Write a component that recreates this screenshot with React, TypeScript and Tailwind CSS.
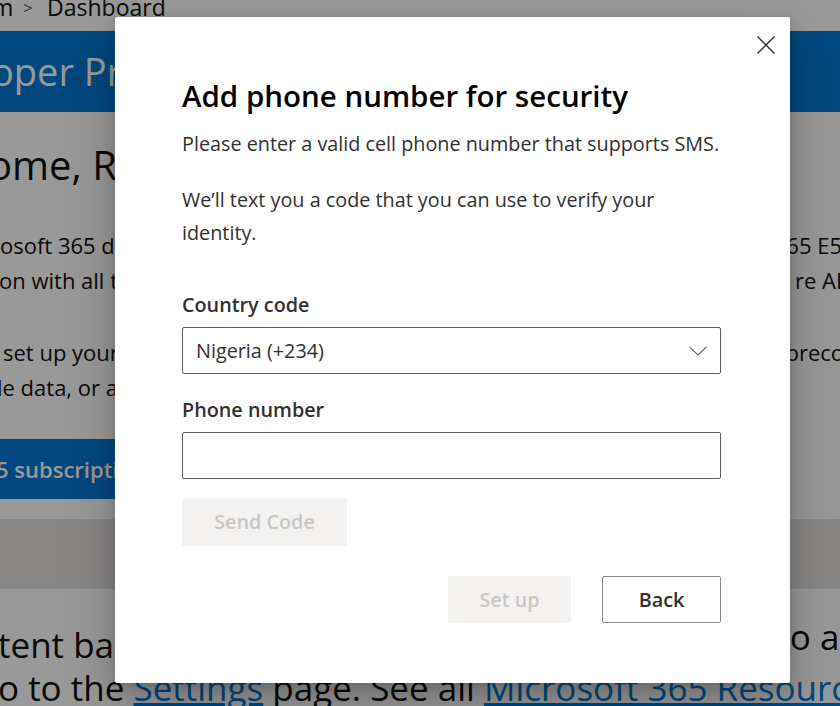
import React from "react";

const font = { fontFamily: '"Open Sans", "Noto Sans", sans-serif' };

function CloseIcon() {
  return (
    <svg width="20" height="20" viewBox="0 0 20 20" fill="none" aria-hidden="true">
      <path d="M1.5 1.5 L18.5 18.5 M18.5 1.5 L1.5 18.5" stroke="#323130" strokeWidth="1.4" />
    </svg>
  );
}

function Chevron() {
  return (
    <svg width="18" height="10" viewBox="0 0 18 10" fill="none" aria-hidden="true">
      <path d="M0.5 0.8 L9 9 L17.5 0.8" stroke="#605e5c" strokeWidth="1.1" />
    </svg>
  );
}

function BackgroundPage() {
  return (
    <div className="absolute inset-0 overflow-hidden bg-white text-[#111]">
      {/* breadcrumb, scrolled mostly out of view */}
      <div className="-mt-[16px] flex h-[47px] items-center whitespace-nowrap text-[23px]">
        <span className="-ml-[8px]">m</span>
        <span className="ml-[10px] text-[17px] text-[#555]">&gt;</span>
        <span className="ml-[14px]">Dashboard</span>
      </div>
      <div className="flex h-[81px] items-center bg-[#0078d4] whitespace-nowrap text-[38px] text-white">
        <span className="-ml-[9px]">oper Program</span>
      </div>
      <div className="mt-[30px] whitespace-nowrap text-[40px] leading-[46px]">
        <span className="-ml-[12px]">ome, Rachel</span>
      </div>
      <div className="mt-[40px] text-[22px] leading-[35px] whitespace-nowrap">
        <div className="flex justify-between">
          <span>osoft 365 developer</span>
          <span className="-mr-[2px]">365 E5</span>
        </div>
        <div className="flex justify-between">
          <span className="-ml-[1px]">on with all the</span>
          <span className="-mr-[12px]">re AD</span>
        </div>
        <div className="h-[37px]" />
        <div className="flex justify-between">
          <span className="ml-[3px]">set up your</span>
          <span className="-mr-[25px]">preconf</span>
        </div>
        <div className="flex justify-between">
          <span className="-ml-[3px]">le data, or add</span>
          <span />
        </div>
      </div>
      <div className="mt-[34px] flex h-[60px] w-[300px] items-center bg-[#0078d4] text-[22px] font-semibold text-white whitespace-nowrap">
        <span className="-ml-[4px]">5 subscription</span>
      </div>
      <div className="mt-[20px] h-[70px] bg-[#e4e2e0]" />
      <div className="mt-[34px] flex justify-between whitespace-nowrap text-[35px] leading-[43px]">
        <span className="-ml-[2px]">tent based</span>
        <span className="-mr-[86px] -mt-[8px]">to access</span>
      </div>
      <div className="whitespace-nowrap text-[35px] leading-[43px]">
        <span className="-ml-[2px]">o to the </span>
        <span className="text-[#0078d4] underline">Settings</span>
        <span> page. See all </span>
        <span className="text-[#0078d4] underline">Microsoft 365 Resources</span>
      </div>
    </div>
  );
}

function Field({ children }: { children?: React.ReactNode }) {
  return (
    <div className="flex h-[47px] w-full items-center justify-between rounded-[2px] border border-[#605e5c] bg-white px-[13px]">
      {children}
    </div>
  );
}

export default function App() {
  return (
    <div className="relative h-[706px] w-[840px] overflow-hidden" style={font}>
      <BackgroundPage />
      <div className="absolute inset-0 bg-black/40" />

      <div className="absolute left-[115px] top-[17px] h-[666px] w-[675px] rounded-[2px] bg-white shadow-[0_25px_58px_rgba(0,0,0,0.22),0_5px_14px_rgba(0,0,0,0.18)]">
        <button className="absolute right-[14px] top-[18px] flex h-[20px] w-[20px] items-center justify-center">
          <CloseIcon />
        </button>

        <div className="pl-[67px] pr-[69px] pt-[61px] text-[#323130]">
          <h1 className="text-[29.5px] font-semibold leading-[36px] text-[#000]">
            Add phone number for security
          </h1>
          <p className="mt-[16px] text-[19.8px] leading-[28px]">
            Please enter a valid cell phone number that supports SMS.
          </p>
          <p className="mt-[25px] text-[19.8px] leading-[33px]">
            We’ll text you a code that you can use to verify your identity.
          </p>

          <label className="mt-[42px] block text-[19.8px] font-semibold leading-[28px]">Country code</label>
          <div className="mt-[8px]">
            <Field>
              <span className="text-[19.8px] text-[#323130]">Nigeria (+234)</span>
              <Chevron />
            </Field>
          </div>

          <label className="mt-[22px] block text-[19.8px] font-semibold leading-[28px]">Phone number</label>
          <div className="mt-[8px]">
            <Field />
          </div>

          <button className="mt-[19px] flex h-[48px] w-[165px] items-center justify-center rounded-[2px] bg-[#f3f2f1] text-[19.8px] font-semibold text-[#c8c6c4]">
            Send Code
          </button>

          <div className="mt-[30px] flex justify-end gap-[31px]">
            <button className="flex h-[47px] w-[123px] items-center justify-center rounded-[2px] bg-[#f3f2f1] text-[19.8px] font-semibold text-[#c8c6c4]">
              Set up
            </button>
            <button className="flex h-[47px] w-[119px] items-center justify-center rounded-[2px] border border-[#8a8886] bg-white text-[19.8px] font-semibold text-[#323130]">
              Back
            </button>
          </div>
        </div>
      </div>
    </div>
  );
}
